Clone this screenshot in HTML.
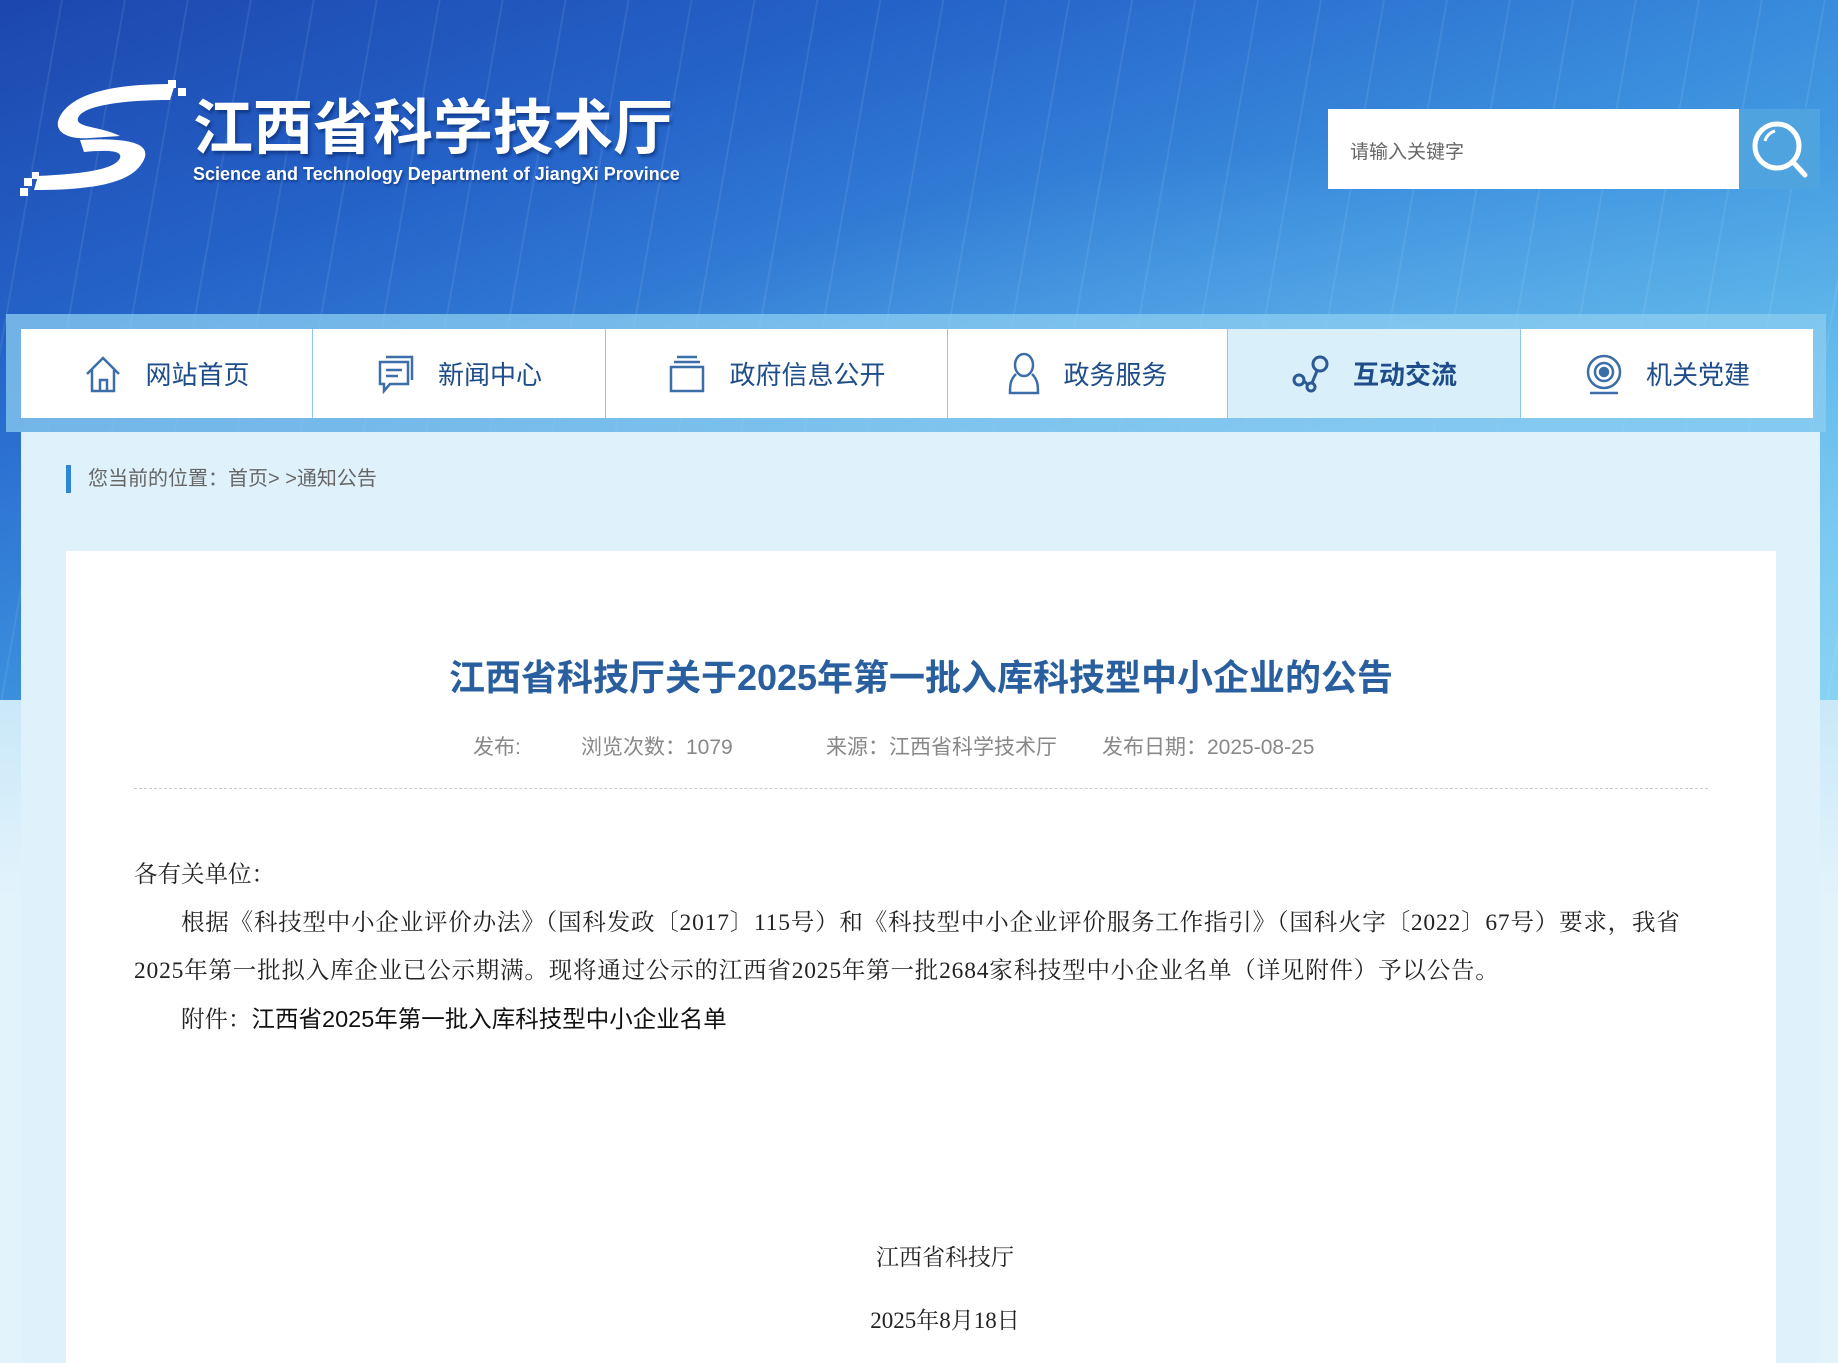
<!DOCTYPE html>
<html><head><meta charset="utf-8">
<style>
*{margin:0;padding:0;box-sizing:border-box}
html,body{width:1838px;height:1363px;overflow:hidden}
body{position:relative;background:#dff2fc;font-family:"Liberation Sans","Noto Sans CJK SC",sans-serif}
#hdr{position:absolute;left:0;top:0;width:1838px;height:700px;
background:linear-gradient(160deg,#1c47ad 0%,#2563c9 25%,#3a8ddd 50%,#56b3e8 75%,#7ccdf0 100%)}
#hdr:after{content:"";position:absolute;left:0;top:0;right:0;bottom:0;
background:radial-gradient(ellipse at 80% 90%,rgba(160,220,250,.5),rgba(0,0,0,0) 55%),
repeating-linear-gradient(100deg,rgba(255,255,255,0) 0 60px,rgba(255,255,255,.08) 60px 62px)}
#lower{position:absolute;left:0;top:700px;width:1838px;height:663px;background:linear-gradient(#c9e8f8,#e3f3fc 30%)}
.logo{position:absolute;left:20px;top:78px}
.t1{position:absolute;left:193px;top:80px;font-size:60px;font-weight:bold;color:#fff;text-shadow:2px 3px 3px rgba(0,30,90,.5)}
.t2{position:absolute;left:193px;top:164px;font-size:18px;color:#fff;font-weight:bold;text-shadow:1px 2px 2px rgba(0,30,90,.5)}
.search{position:absolute;left:1328px;top:109px;width:411px;height:80px;background:#fff;font-size:19px;color:#666;padding:28px 0 0 22px}
.sbtn{position:absolute;left:1739px;top:109px;width:81px;height:80px;background:#4fa3df}
#navbg{position:absolute;left:6px;top:314px;width:1820px;height:118px;background:rgba(140,205,240,.75)}
#nav{position:absolute;left:21px;top:329px;height:89px;display:flex}
#nav div{height:89px;background:#fff;border-right:1px solid #8fc8ec;display:flex;align-items:center;justify-content:center;font-size:26px;color:#1e4d8a;gap:22px}
#nav div.act{background:#d9f0fb;font-weight:bold}
#main{position:absolute;left:21px;top:432px;width:1799px;height:931px;background:#dff2fc}
.bc{position:absolute;left:66px;top:465px;height:28px;border-left:5px solid #2f86d6;padding-left:17px;font-size:20px;line-height:28px;color:#666}
.panel{position:absolute;left:66px;top:551px;width:1710px;height:812px;background:#fff}
h1{position:absolute;left:0;width:1710px;top:98px;text-align:center;font-size:36px;color:#2a5f9f;font-weight:bold}
.meta{position:absolute;top:180px;font-size:21px;color:#888;white-space:pre}
.dash{position:absolute;left:68px;top:237px;width:1574px;border-top:1px dashed #ccc}
.body{position:absolute;left:68px;top:300px;width:1640px;font-family:"Liberation Serif","Noto Serif CJK SC",serif;font-size:23.5px;line-height:48px;color:#222}
.body p.i{text-indent:47px}
.body p.l{letter-spacing:0.8px}
.body a{font-family:"Liberation Sans","Noto Sans CJK SC",sans-serif;color:#111}
.sig{position:absolute;left:24px;width:1710px;text-align:center;font-family:"Liberation Serif","Noto Serif CJK SC",serif;font-size:23px;color:#222}
</style></head><body>
<div id="hdr"></div>
<div id="lower"></div>
<svg class="logo" width="170" height="120" viewBox="0 0 170 120">
<path d="M155 6 C110 6 60 10 42 35 C30 52 45 62 70 60 L100 58 C80 48 55 50 58 40 C62 28 100 22 150 22 Z" fill="#fff"/>
<path d="M60 62 C100 60 140 62 120 88 C105 108 60 112 14 112 L18 98 C60 96 95 92 100 80 C103 72 85 72 64 74 Z" fill="#fff"/>
<rect x="148" y="2" width="8" height="8" fill="#fff"/><rect x="158" y="10" width="8" height="8" fill="#fff"/><rect x="140" y="14" width="7" height="7" fill="#fff"/>
<rect x="4" y="100" width="8" height="8" fill="#fff"/><rect x="0" y="110" width="8" height="8" fill="#fff"/><rect x="12" y="94" width="7" height="7" fill="#fff"/>
</svg>
<div class="t1">江西省科学技术厅</div>
<div class="t2">Science and Technology Department of JiangXi Province</div>
<div class="search">请输入关键字</div>
<div class="sbtn"><svg width="81" height="80" viewBox="0 0 81 80"><circle cx="38" cy="37" r="22" fill="none" stroke="#fff" stroke-width="5"/><path d="M54 53 L66 66" stroke="#fff" stroke-width="5" stroke-linecap="round"/><path d="M26 32 A14 14 0 0 1 36 22" stroke="#fff" stroke-width="3" fill="none"/></svg></div>
<div id="navbg"></div>
<div id="nav">
<div style="width:292px"><svg width="40" height="40" viewBox="0 0 40 40" fill="none" stroke="#3c6ea8" stroke-width="2.5"><path d="M4 20 L20 4 L36 20 M9 16 V37 H31 V16 M17 37 V26 H24 V37"/></svg>网站首页</div>
<div style="width:293px"><svg width="40" height="40" viewBox="0 0 40 40" fill="none" stroke="#3c6ea8" stroke-width="2.5"><path d="M10 3 H36 V26 M4 8 H32 V30 H14 L8 37 V30 H4 Z M10 16 H26 M10 22 H22"/></svg>新闻中心</div>
<div style="width:342px"><svg width="40" height="40" viewBox="0 0 40 40" fill="none" stroke="#3c6ea8" stroke-width="2.5"><path d="M10 3 H30 M7 8 H33 M4 13 H36 V37 H4 Z"/></svg>政府信息公开</div>
<div style="width:280px"><svg width="34" height="44" viewBox="0 0 34 44" fill="none" stroke="#3c6ea8" stroke-width="2.5"><ellipse cx="17" cy="13" rx="9" ry="11"/><path d="M9 22 C3 28 3 34 3 41 H31 C31 34 31 28 25 22"/></svg>政务服务</div>
<div class="act" style="width:293px"><svg width="40" height="40" viewBox="0 0 40 40" fill="none" stroke="#2c5a96" stroke-width="3"><circle cx="29" cy="10" r="7"/><circle cx="8" cy="26" r="5"/><circle cx="20" cy="33" r="4"/><path d="M12 26 L17 31 M26 17 L21 29"/></svg>互动交流</div>
<div style="width:292px;border-right:none"><svg width="40" height="42" viewBox="0 0 40 42" fill="none" stroke="#3c6ea8" stroke-width="2.5"><circle cx="20" cy="19" r="16"/><circle cx="20" cy="19" r="9"/><circle cx="20" cy="19" r="4" fill="#3c6ea8"/><path d="M6 40 H34"/></svg>机关党建</div>
</div>
<div id="main"></div>
<div class="bc">您当前的位置：首页&gt; &gt;通知公告</div>
<div class="panel">
<h1>江西省科技厅关于2025年第一批入库科技型中小企业的公告</h1>
<div class="meta" style="left:407px">发布:</div>
<div class="meta" style="left:515px">浏览次数：1079</div>
<div class="meta" style="left:760px">来源：江西省科学技术厅</div>
<div class="meta" style="left:1036px">发布日期：2025-08-25</div>
<div class="dash"></div>
<div class="body">
<p>各有关单位：</p>
<p class="i l">根据《科技型中小企业评价办法》（国科发政〔2017〕115号）和《科技型中小企业评价服务工作指引》（国科火字〔2022〕67号）要求，我省<br>2025年第一批拟入库企业已公示期满。现将通过公示的江西省2025年第一批2684家科技型中小企业名单（详见附件）予以公告。</p>
<p class="i">附件：<a>江西省2025年第一批入库科技型中小企业名单</a></p>
</div>
<div class="sig" style="top:688px">江西省科技厅</div>
<div class="sig" style="top:751px">2025年8月18日</div>
</div>
</body></html>
